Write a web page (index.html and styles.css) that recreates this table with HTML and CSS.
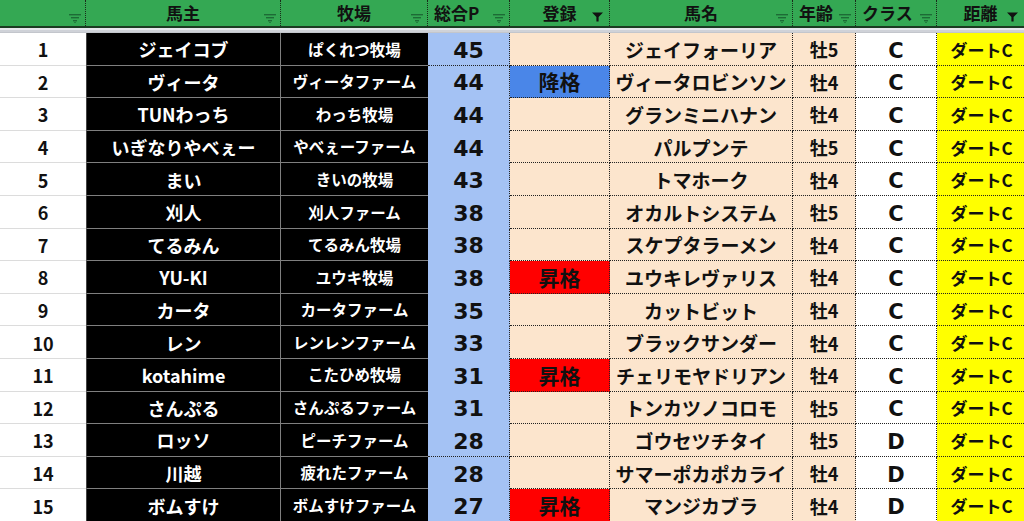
FILE: index.html
```html
<!DOCTYPE html>
<html lang="ja">
<head>
<meta charset="utf-8">
<title>ランキング</title>
<link rel="stylesheet" href="styles.css">
</head>
<body>
<svg width="0" height="0" class="defs">
  <symbol id="flt" viewBox="0 0 12 10">
    <rect x="0" y="1" width="12" height="1.4" fill="#1d6b36"/>
    <rect x="2" y="4" width="8" height="1.4" fill="#1d6b36"/>
    <rect x="4" y="7" width="4" height="1.4" fill="#1d6b36"/>
    <rect x="5.3" y="9" width="1.4" height="1" fill="#1d6b36"/>
  </symbol>
  <symbol id="fltOn" viewBox="0 0 12 10">
    <path d="M0 0 H12 L7.2 5 V10 H4.8 V5 Z" fill="#111"/>
  </symbol>
</svg>
<div class="sheet">
  <div class="hdr">
    <div class="h"><svg class="fi"><use href="#flt"/></svg></div>
    <div class="h">馬主<svg class="fi"><use href="#flt"/></svg></div>
    <div class="h">牧場<svg class="fi"><use href="#flt"/></svg></div>
    <div class="h h-left">総合P<svg class="fi"><use href="#flt"/></svg></div>
    <div class="h">登録<svg class="fi on"><use href="#fltOn"/></svg></div>
    <div class="h">馬名<svg class="fi"><use href="#flt"/></svg></div>
    <div class="h h-left">年齢<svg class="fi"><use href="#flt"/></svg></div>
    <div class="h h-left">クラス<svg class="fi"><use href="#flt"/></svg></div>
    <div class="h">距離<svg class="fi on"><use href="#fltOn"/></svg></div>
  </div>
  <div class="band"></div>
  <div class="body" id="body">
    <div class="row"><div class="c rank">1</div><div class="c own">ジェイコブ</div><div class="c farm">ぱくれつ牧場</div><div class="c pts sel">45</div><div class="c reg"></div><div class="c name">ジェイフォーリア</div><div class="c age">牡5</div><div class="c cls">C</div><div class="c dist">ダートC</div></div>
    <div class="row"><div class="c rank">2</div><div class="c own">ヴィータ</div><div class="c farm">ヴィータファーム</div><div class="c pts">44</div><div class="c reg down">降格</div><div class="c name">ヴィータロビンソン</div><div class="c age">牡4</div><div class="c cls">C</div><div class="c dist">ダートC</div></div>
    <div class="row"><div class="c rank">3</div><div class="c own">TUNわっち</div><div class="c farm">わっち牧場</div><div class="c pts">44</div><div class="c reg"></div><div class="c name">グランミニハナン</div><div class="c age">牡4</div><div class="c cls">C</div><div class="c dist">ダートC</div></div>
    <div class="row"><div class="c rank">4</div><div class="c own">いぎなりやべぇー</div><div class="c farm">やべぇーファーム</div><div class="c pts">44</div><div class="c reg"></div><div class="c name">パルプンテ</div><div class="c age">牡5</div><div class="c cls">C</div><div class="c dist">ダートC</div></div>
    <div class="row"><div class="c rank">5</div><div class="c own">まい</div><div class="c farm">きいの牧場</div><div class="c pts">43</div><div class="c reg"></div><div class="c name">トマホーク</div><div class="c age">牡4</div><div class="c cls">C</div><div class="c dist">ダートC</div></div>
    <div class="row"><div class="c rank">6</div><div class="c own">刈人</div><div class="c farm">刈人ファーム</div><div class="c pts">38</div><div class="c reg"></div><div class="c name">オカルトシステム</div><div class="c age">牡5</div><div class="c cls">C</div><div class="c dist">ダートC</div></div>
    <div class="row"><div class="c rank">7</div><div class="c own">てるみん</div><div class="c farm">てるみん牧場</div><div class="c pts">38</div><div class="c reg"></div><div class="c name">スケプタラーメン</div><div class="c age">牡4</div><div class="c cls">C</div><div class="c dist">ダートC</div></div>
    <div class="row"><div class="c rank">8</div><div class="c own">YU-KI</div><div class="c farm">ユウキ牧場</div><div class="c pts">38</div><div class="c reg up">昇格</div><div class="c name">ユウキレヴァリス</div><div class="c age">牡4</div><div class="c cls">C</div><div class="c dist">ダートC</div></div>
    <div class="row"><div class="c rank">9</div><div class="c own">カータ</div><div class="c farm">カータファーム</div><div class="c pts">35</div><div class="c reg"></div><div class="c name">カットビット</div><div class="c age">牡4</div><div class="c cls">C</div><div class="c dist">ダートC</div></div>
    <div class="row"><div class="c rank">10</div><div class="c own">レン</div><div class="c farm">レンレンファーム</div><div class="c pts">33</div><div class="c reg"></div><div class="c name">ブラックサンダー</div><div class="c age">牡4</div><div class="c cls">C</div><div class="c dist">ダートC</div></div>
    <div class="row"><div class="c rank">11</div><div class="c own">kotahime</div><div class="c farm">こたひめ牧場</div><div class="c pts">31</div><div class="c reg up">昇格</div><div class="c name">チェリモヤドリアン</div><div class="c age">牡4</div><div class="c cls">C</div><div class="c dist">ダートC</div></div>
    <div class="row"><div class="c rank">12</div><div class="c own">さんぷる</div><div class="c farm">さんぷるファーム</div><div class="c pts">31</div><div class="c reg"></div><div class="c name">トンカツノコロモ</div><div class="c age">牡5</div><div class="c cls">C</div><div class="c dist">ダートC</div></div>
    <div class="row"><div class="c rank">13</div><div class="c own">ロッソ</div><div class="c farm">ピーチファーム</div><div class="c pts sel">28</div><div class="c reg"></div><div class="c name">ゴウセツチタイ</div><div class="c age">牡5</div><div class="c cls">D</div><div class="c dist">ダートC</div></div>
    <div class="row"><div class="c rank">14</div><div class="c own">川越</div><div class="c farm">疲れたファーム</div><div class="c pts">28</div><div class="c reg"></div><div class="c name">サマーポカポカライ</div><div class="c age">牡4</div><div class="c cls">D</div><div class="c dist">ダートC</div></div>
    <div class="row"><div class="c rank">15</div><div class="c own">ボムすけ</div><div class="c farm">ボムすけファーム</div><div class="c pts">27</div><div class="c reg up">昇格</div><div class="c name">マンジカブラ</div><div class="c age">牡4</div><div class="c cls">D</div><div class="c dist">ダートC</div></div>
  </div>
</div>
</body>
</html>
```
FILE: styles.css
```css
html, body {
  margin: 0;
  padding: 0;
  background: #fff;
  overflow: hidden;
}
body {
  width: 1024px;
  height: 521px;
  font-family: "Noto Sans CJK JP", "Noto Sans", sans-serif;
  font-weight: 700;
  color: #111;
}
.defs { position: absolute; }
.sheet {
  display: flex;
  flex-direction: column;
  width: 1024px;
}
.hdr, .row {
  display: grid;
  grid-template-columns: 86px 195px 147px 82px 100px 183px 63px 81px 87px;
}
.hdr {
  height: 28px;
  background: #34a853;
  border-bottom: 2px solid #1b3b22;
  box-sizing: border-box;
}
.h {
  position: relative;
  display: flex;
  align-items: center;
  justify-content: center;
  font-size: 17px;
  line-height: 1;
  color: #111;
  border-right: 1px dotted #1a2a1a;
  padding-bottom: 1px;
  box-sizing: border-box;
}
.h:last-child { border-right: none; }
.h-left { justify-content: flex-start; padding-left: 6px; }
.fi {
  position: absolute;
  right: 4px;
  top: 13px;
  width: 12px;
  height: 10px;
}
.fi.on { right: 6px; top: 12px; width: 11px; height: 10px; }
.band {
  height: 4px;
  background: linear-gradient(#e6e8ec 0 2px, #cfd2d8 2px 4px);
  border-bottom: 1px solid #c3c6cc;
}
.row {
  height: 32.6px;
}
.c {
  display: flex;
  align-items: center;
  justify-content: center;
  box-sizing: border-box;
  line-height: 1;
  white-space: nowrap;
  padding-top: 1px;
}
.rank {
  background: #fff;
  font-size: 18px;
  border-bottom: 1px solid #dcdcdc;
}
.own {
  background: #000;
  color: #fff;
  font-size: 18px;
  border-bottom: 1px solid #7f7f7f;
  border-right: 1px solid #7f7f7f;
  border-left: 1px solid #444;
}
.farm {
  background: #000;
  color: #fff;
  font-size: 15.5px;
  border-bottom: 1px solid #7f7f7f;
}
.pts {
  background: #a4c2f4;
  font-family: "DejaVu Sans", "Noto Sans CJK JP", sans-serif;
  font-size: 22px;
  padding-top: 4px;
  border-right: 1px dotted #222;
  border-bottom: 1px solid #a4c2f4;
}
.pts.sel { border-bottom: 1px dotted #222; }
.reg {
  background: #fce5cd;
  font-size: 21px;
  border-bottom: 1px dotted #222;
  border-right: 1px dotted #222;
}
.reg.down { background: #4a86e8; }
.reg.up { background: #ff0000; }
.name {
  background: #fce5cd;
  font-size: 19px;
  border-bottom: 1px dotted #222;
  border-right: 1px dotted #222;
}
.age {
  background: #fce5cd;
  font-size: 18px;
  border-bottom: 1px dotted #222;
  border-right: 1px dotted #222;
}
.cls {
  background: #fff;
  font-family: "DejaVu Sans", "Noto Sans CJK JP", sans-serif;
  font-size: 21px;
  padding-top: 5px;
  border-bottom: 1px dotted #222;
  border-right: 1px dotted #222;
}
.dist {
  background: #ffff00;
  font-size: 17px;
  border-bottom: 1px dotted #222;
  padding-left: 2px;
}
```
